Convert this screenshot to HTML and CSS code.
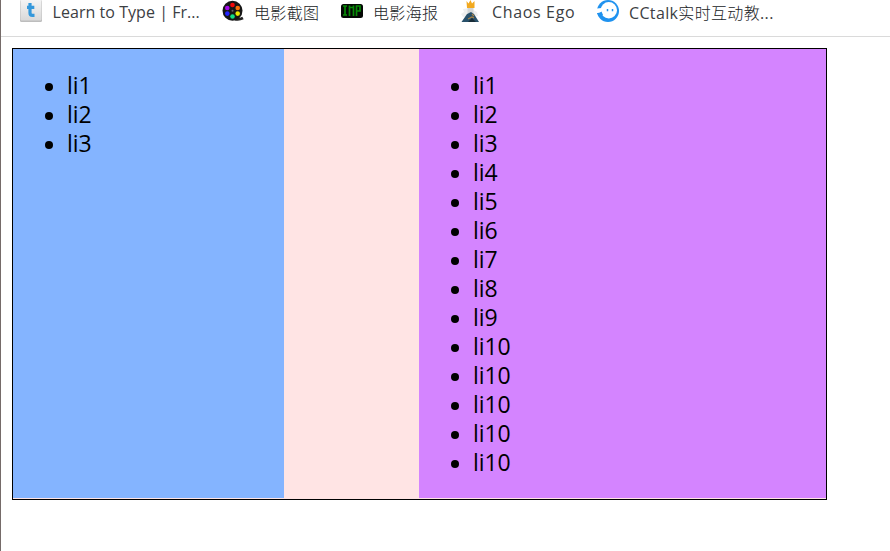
FILE: index.html
```html
<!DOCTYPE html>
<html lang="zh-CN">
<head>
<meta charset="utf-8">
<title>Columns</title>
<link rel="stylesheet" href="styles.css">
</head>
<body>
<nav class="bookmarks">
  <a class="bookmark typing">
    <svg class="icon" viewBox="0 0 22 22"><defs><linearGradient id="key" x2="0" y2="1"><stop offset="0" stop-color="#f4f4f4"/><stop offset="1" stop-color="#d9d9d9"/></linearGradient></defs><rect width="22" height="22" rx="1.500" fill="#bdbdbd"/><rect x=".5" width="21" height="20.600" rx="1" fill="url(#key)"/><path d="M10 3v10q0 2.300 2.300 2.300H14.500M7 7.300H14.300" fill="none" stroke="#3498db" stroke-width="3.200"/></svg>
    <span class="label">Learn to Type | Fr...</span>
  </a>
  <a class="bookmark stills">
    <svg class="icon" viewBox="0 0 22 22"><path d="M13 19q4 1 8-1" fill="none" stroke="#222" stroke-width="3"/><circle cx="10.500" cy="10.800" r="10" fill="#161616"/><circle cx="10.500" cy="5" r="2.300" fill="#f30808"/><circle cx="15.700" cy="8" r="2.300" fill="#f96f08"/><circle cx="15.700" cy="13.600" r="2.300" fill="#e8e800"/><circle cx="10.500" cy="16.500" r="2.300" fill="#10df83"/><circle cx="5.300" cy="13.600" r="2.300" fill="#2424ff"/><circle cx="5.300" cy="8" r="2.300" fill="#a40aec"/><circle cx="10.500" cy="10.800" r="1" fill="#666"/></svg>
    <span class="label"><span class="han">电影截图</span></span>
  </a>
  <a class="bookmark posters">
    <svg class="icon" viewBox="0 0 22 22"><rect y="4" width="22" height="14" rx="2.500" fill="#040804"/><path d="M2 6h4M4 6v9M2 15h4M8.500 16V5.500M12.500 16V5.500M8.500 7.500h4M15.500 16V6H19v5H15.500" fill="none" stroke="#078c07" stroke-width="1.700"/></svg>
    <span class="label"><span class="han">电影海报</span></span>
  </a>
  <a class="bookmark chaos">
    <svg class="icon" viewBox="0 0 22 22"><path d="M3 9l7-1 7 4 1 4-15 1-2-3 3-2z" fill="#efefef"/><path d="M7.500 8h6v5h-6z" fill="#d3d6d6"/><path d="M1.500 22L7 14l4-2 3 2 5 8z" fill="#28506a"/><path d="M6.500 1l2 2.500L10.500 0l1.500 3.500L14.500 1v7H7z" fill="#f2a91f"/><path d="M8 19l4-2 2 1M12 14l2 2" fill="none" stroke="#a98246" stroke-width="1.200"/><path d="M8 22l4-4 4 4z" fill="#182c38"/></svg>
    <span class="label">Chaos Ego</span>
  </a>
  <a class="bookmark cctalk">
    <svg class="icon" viewBox="0 0 22 22"><circle cx="11" cy="11" r="11" fill="#1f92ef"/><circle cx="11.800" cy="10.300" r="8.200" fill="#fff"/><path d="M0 8.500L4.500 8v4q-2 1.200-4.500 1z" fill="#fff"/><path d="M0 13q3 .5 4.500-1.500l1.500 3.500-4 1.500z" fill="#1f92ef"/><path d="M10.500 9v2.200M15.500 9v2.200" stroke="#1f92ef" stroke-width="1.500"/></svg>
    <span class="label">CCtalk<span class="han">实时互动教</span>...</span>
  </a>
</nav>
<main class="columns">
  <ul class="column blue"><li>li1</li><li>li2</li><li>li3</li></ul>
  <ul class="column purple"><li>li1</li><li>li2</li><li>li3</li><li>li4</li><li>li5</li><li>li6</li><li>li7</li><li>li8</li><li>li9</li><li>li10</li><li>li10</li><li>li10</li><li>li10</li><li>li10</li></ul>
</main>
</body>
</html>
```
FILE: styles.css
```css
* { box-sizing: border-box; }
body {
  margin: 0;
  height: 551px;
  overflow: hidden;
  border-left: 1px solid #756b69;
  background: #fff;
  font-family: "Open Sans", "Noto Sans CJK SC", sans-serif;
  color: #000;
}
.bookmarks {
  display: flex;
  height: 37px;
  padding-left: 19px;
  border-bottom: 1px solid #dadada;
}
.bookmark {
  display: flex;
  gap: 10px;
  height: 22px;
  color: #3c4043;
  font-size: 16px;
  line-height: 24px;
  white-space: nowrap;
}
.icon { flex: none; width: 22px; height: 22px; }
.label { letter-spacing: .05px; }
.typing { width: 202px; }
.typing .label { padding-left: .5px; }
.stills { width: 119px; }
.posters { width: 119px; }
.chaos { width: 137px; }
.chaos .label { letter-spacing: .65px; }
.cctalk .label { letter-spacing: .35px; }
.han {
  color: #202326;
  font-family: "Noto Sans CJK SC", sans-serif;
  font-weight: 300;
  letter-spacing: .35px;
}
.columns {
  display: flex;
  justify-content: space-between;
  width: 815px;
  height: 452px;
  margin: 11px 0 0 11px;
  padding-bottom: 1px;
  border: 1px solid #000;
  background: #ffe4e4;
}
.column {
  margin: 0;
  padding: 22px 0 0 54px;
  list-style: none;
  font-size: 23px;
  line-height: 29px;
}
.blue { width: 271px; background: #84b4ff; }
.purple { width: 407px; background: #d484ff; }
.column li { display: flex; align-items: center; height: 29px; letter-spacing: -.1px; }
.column li::before {
  content: "";
  flex: none;
  width: 8px;
  height: 8px;
  margin: 2px 14px 0 -22px;
  border-radius: 50%;
  background: #000;
}
```
